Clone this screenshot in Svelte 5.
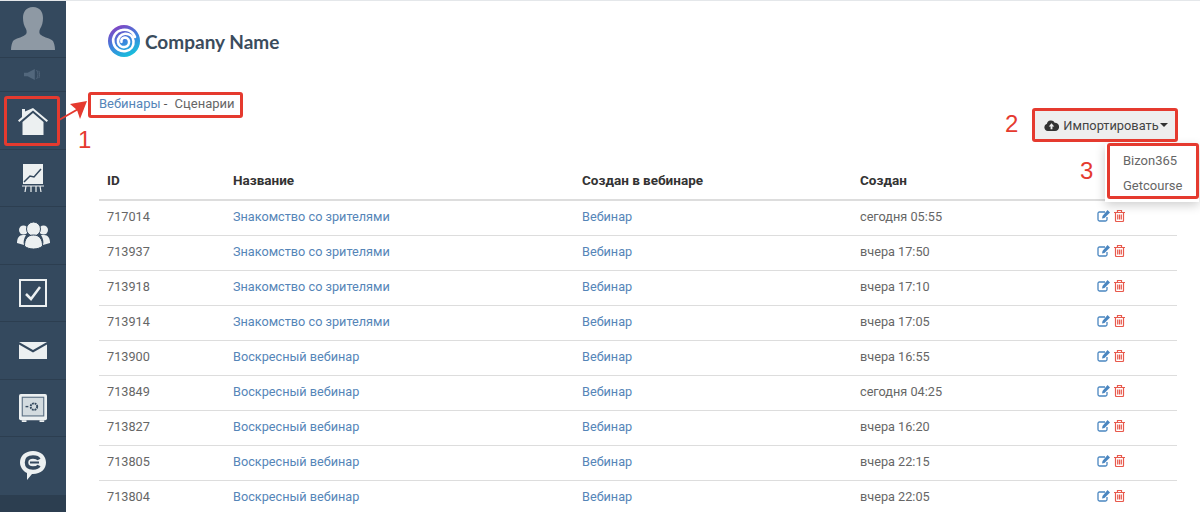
<script>
  const rows = [
    ["717014", "Знакомство со зрителями", "сегодня 05:55"],
    ["713937", "Знакомство со зрителями", "вчера 17:50"],
    ["713918", "Знакомство со зрителями", "вчера 17:10"],
    ["713914", "Знакомство со зрителями", "вчера 17:05"],
    ["713900", "Воскресный вебинар", "вчера 16:55"],
    ["713849", "Воскресный вебинар", "сегодня 04:25"],
    ["713827", "Воскресный вебинар", "вчера 16:20"],
    ["713805", "Воскресный вебинар", "вчера 22:15"],
    ["713804", "Воскресный вебинар", "вчера 22:05"],
  ];
</script>

<div class="page">
  <aside class="sidebar">
    <div class="item avatar">
      <svg width="44" height="43" viewBox="0 0 44 43">
        <path fill="#8e99a4" d="M22 0c-7 0-10 5-10 11 0 4 1 8 3 11 1 2 1 5-1 6-4 3-9 3-12 6-1 2-2 5-2 9h44c0-4-1-7-2-9-3-3-8-3-12-6-2-1-2-4-1-6 2-3 3-7 3-11 0-6-3-11-10-11z" />
      </svg>
    </div>
    <div class="item speaker">
      <svg width="18" height="13" viewBox="0 0 20 14">
        <path fill="#52677c" d="M0 5h4l8-4v12l-8-4H0z" />
        <path fill="none" stroke="#52677c" d="M14 2c2 3 2 7 0 10M16.500 3c1 2 1 6 0 8" />
      </svg>
    </div>
    <div class="item home">
      <svg width="30" height="27" viewBox="0 0 30 27">
        <path fill="#ecf0f1" d="M4 1h3v2.500L15 0l15 12.500-1.300 1.500L15 2.500 1.300 14 0 12.500l4-3.500zM4.500 14 15 5l10.500 9v13h-21z" />
      </svg>
    </div>
    <div class="item chart">
      <svg width="22" height="28" viewBox="0 0 22 28">
        <path fill="#ecf0f1" d="M1 0h20v20H1z" />
        <path fill="none" stroke="#34495e" stroke-width="1.500" d="M2 18l6-6 4 1 7-8" />
        <path fill="none" stroke="#ecf0f1" stroke-width="1.200" d="M0 22h22M4 22l-1 6M9 22v6M14 22v6M18 22l1 6" />
      </svg>
    </div>
    <div class="item users">
      <svg width="33" height="27" viewBox="0 0 33 27">
        <circle cx="6.500" cy="8" r="4.500" fill="#ecf0f1" />
        <circle cx="26.500" cy="8" r="4.500" fill="#ecf0f1" />
        <path fill="#ecf0f1" d="M0 21c0-5 2-8 6-8h3c-2 3-3 7-2 10zM33 21c0-5-2-8-6-8h-3c2 3 3 7 2 10z" />
        <circle cx="16.500" cy="7" r="7" stroke="#34495e" fill="#ecf0f1" />
        <path fill="#ecf0f1" stroke="#34495e" d="M7.500 24c0-7 3-11 9-11s9 4 9 11c-4 4-14 4-18 0z" />
      </svg>
    </div>
    <div class="item check">
      <svg width="28" height="28" viewBox="0 0 28 28">
        <rect x="1" y="1" width="26" height="26" fill="none" stroke="#ecf0f1" stroke-width="2" />
        <path fill="none" stroke="#ecf0f1" stroke-width="2.500" d="M7 15l5 5 9-12" />
      </svg>
    </div>
    <div class="item mail">
      <svg width="28" height="17" viewBox="0 0 28 17">
        <path fill="#ecf0f1" d="M0 0h28L14 8zM0 2.500l14 8 14-8V17H0z" />
      </svg>
    </div>
    <div class="item safe">
      <svg width="28" height="28" viewBox="0 0 30 30">
        <rect width="30" height="28" rx="2" fill="#ecf0f1" />
        <rect x="3.500" y="3.500" width="23" height="20" fill="#d3dbdf" stroke="#5b7083" stroke-width="1.200" />
        <circle cx="16" cy="13.500" r="3.500" fill="none" stroke="#34495e" stroke-width="2" stroke-dasharray="2 0.800" />
        <path stroke="#34495e" stroke-width="1.500" d="M7 13.500h3" />
        <path fill="#ecf0f1" d="M3 28h5v2H3zM22 28h5v2h-5z" />
      </svg>
    </div>
    <div class="item chat">
      <svg width="26" height="29" viewBox="0 0 26 29">
        <path fill="#ecf0f1" d="M13 0c8 0 13 5 13 11.500S21 23 13 23h-1l-5 6v-7C3 20 0 16 0 11.500 0 5 5 0 13 0z" />
        <path fill="none" stroke="#34495e" stroke-width="3.500" d="M19 8.500C18 6.500 16 6 13 6c-4 0-6.500 2-6.500 5.500S9 17 13 17c3 0 5-.5 6-2.500" />
        <path fill="none" stroke="#34495e" stroke-width="2" d="M10 11.500h9" />
      </svg>
    </div>
    <div class="rest"></div>
  </aside>

  <main class="content">
    <header class="logo">
      <svg width="32" height="32" viewBox="0 0 32 32">
        <defs>
          <linearGradient id="sw" x1="0.200" y1="0" x2="0.700" y2="1">
            <stop offset="0" stop-color="#8a3cc0" />
            <stop offset="0.500" stop-color="#3f80dc" />
            <stop offset="1" stop-color="#14c4dc" />
          </linearGradient>
        </defs>
        <circle cx="16" cy="16" r="16" fill="url(#sw)" />
        <path fill="none" stroke="#fff" stroke-width="2.600" stroke-linecap="round" d="M27 12C25 6 19 4 14 5 8 6 4 12 5.500 18c1.500 6 7 9 12.500 8 5-1 8-5 7.500-10-.5-4.500-4-7.500-8.500-7.300C13 9 9.500 12.500 10 17c.4 3.500 3.500 5.500 6.800 5 3-.5 4.700-3 4.200-6-.5-2.500-2.700-3.800-5-3.300-2 .4-3 2.300-2.500 4.100" />
      </svg>
      <span>Company Name</span>
    </header>

    <div class="toolbar">
      <nav class="crumbs"><a href="#top">Вебинары</a> <b>-</b> <span>Сценарии</span></nav>
      <div class="import">
        <button type="button">
          <svg width="15" height="11" viewBox="0 0 16 12">
            <path fill="#333" d="M4 12a4 4 0 0 1-1-7.800A4.500 4.500 0 0 1 11.500 3 4.500 4.500 0 0 1 12 12z" />
            <path fill="#eee" d="M8 3.500 11 7H9v3H7V7H5z" />
          </svg>
          Импортировать<i class="caret"></i>
        </button>
        <div class="menu">
          <div>Bizon365</div>
          <div>Getcourse</div>
        </div>
      </div>
    </div>

    <table>
      <thead>
        <tr>
          <th class="c-id">ID</th>
          <th class="c-name">Название</th>
          <th class="c-web">Создан в вебинаре</th>
          <th class="c-date">Создан</th>
          <th></th>
        </tr>
      </thead>
      <tbody>
        {#each rows as [id, name, date]}
          <tr>
            <td>{id}</td>
            <td><a href="#top">{name}</a></td>
            <td><a href="#top">Вебинар</a></td>
            <td>{date}</td>
            <td class="actions">
              <svg width="13" height="12" viewBox="0 0 13 12">
                <path fill="none" stroke="#4a86c0" stroke-width="1.300" d="M8 2H2.500C1.500 2 1 2.500 1 3.500v6c0 1 .5 1.500 1.500 1.500h6c1 0 1.500-.5 1.500-1.500V7" />
                <path fill="#4a86c0" d="M10.500 0 13 2.500 7.500 8 5 8.500 5.500 6z" />
              </svg>
              <svg class="trash" width="11" height="12" viewBox="0 0 11 12">
                <path fill="none" stroke="#e8594c" stroke-width="1.200" d="M0 2.500h11M3.500 2.500v-2h4v2M1.500 2.500v8c0 .6.400 1 1 1h6c.6 0 1-.4 1-1v-8M3.700 4.500v5M5.500 4.500v5M7.300 4.500v5" />
              </svg>
            </td>
          </tr>
        {/each}
      </tbody>
    </table>
  </main>

  <!-- разметка поверх скриншота -->
  <div class="mark" style="left:4px;top:95px;width:50px;height:44px"></div>
  <div class="mark" style="left:88px;top:91px;width:149px;height:20px"></div>
  <div class="mark" style="left:1032px;top:107px;width:140px;height:28px"></div>
  <div class="mark" style="left:1107px;top:142px;width:86px;height:50px"></div>
  <svg class="arrow" width="40" height="32" viewBox="0 0 40 32">
    <path fill="none" stroke="#e53a2f" stroke-width="2" d="M1 22 22 10" />
    <path fill="#e53a2f" d="M29 3 12 6l7 6 3 9z" />
  </svg>
  <span class="num" style="left:78px;top:126px">1</span>
  <span class="num" style="left:1005px;top:110px">2</span>
  <span class="num" style="left:1080px;top:157px">3</span>
</div>

<style>
  :global(body) {
    background: #fff;
    font-family: Roboto, "Liberation Sans", sans-serif;
    overflow: hidden;
  }

  .page {
    position: relative;
    display: flex;
    height: 512px;
    overflow: hidden;
    border-top: 1px solid #e4e7ea;
    box-sizing: border-box;
    color: #666;
  }

  .sidebar {
    width: 66px;
    flex: none;
    display: flex;
    flex-direction: column;
    background: #34495e;
  }

  .item {
    height: 57.5px;
    display: flex;
    align-items: center;
    justify-content: center;
    box-sizing: border-box;
    border-bottom: 1px solid #2c3e50;
    flex: none;
  }

  .avatar {
    height: 57px;
    padding-bottom: 2px;
  }
  .speaker {
    height: 34px;
  }
  .home {
    padding-top: 3px;
  }
  .chat {
    border-bottom: 0;
  }
  .rest {
    flex: 1;
    background: #2c3e50;
  }

  .content {
    flex: 1;
    padding: 0 23px 0 33px;
    min-width: 0;
  }

  .logo {
    display: flex;
    align-items: center;
    gap: 5px;
    height: 80px;
    padding-left: 9px;
    color: #3b4c5d;
    box-sizing: border-box;
  }
  .logo span {
    font-family: Lato, "Noto Sans", sans-serif;
    font-size: 19px;
    font-weight: 700;
  }

  .toolbar {
    display: flex;
    justify-content: space-between;
    height: 82px;
    box-sizing: border-box;
  }

  .crumbs {
    font-size: 13px;
    padding-top: 14px;
    line-height: 18px;
  }
  .crumbs a {
    color: #5585b8;
    text-decoration: none;
  }
  .crumbs b {
    color: #555;
    font-weight: 400;
    margin-right: 4px;
  }

  .import {
    position: relative;
    padding-top: 29px;
  }
  .import button {
    display: flex;
    align-items: center;
    gap: 4px;
    width: 142px;
    height: 30px;
    justify-content: center;
    padding: 0;
    border: 0;
    background: #eee;
    color: #444;
    font: inherit;
    font-size: 12.800px;
  }
  .caret {
    width: 0;
    height: 0;
    margin-left: -3px;
    border: 4px solid transparent;
    border-top-color: #333;
    border-bottom: 0;
  }
  .menu {
    position: absolute;
    top: 63px;
    right: -22px;
    width: 94px;
    padding: 4px 0;
    background: #fff;
    box-shadow: 0 3px 10px rgba(0, 0, 0, 0.2);
    color: #666;
    font-size: 13px;
    line-height: 25px;
    text-indent: 18px;
  }

  table {
    width: 100%;
    border-collapse: collapse;
    font-size: 12.700px;
    table-layout: fixed;
  }
  th {
    height: 37px;
    padding: 0 8px 2px;
    text-align: left;
    font-size: 13.500px;
    font-weight: 700;
    color: #333;
    border-bottom: 2px solid #ddd;
    box-sizing: border-box;
  }
  .c-id {
    width: 126px;
  }
  .c-name {
    width: 349px;
  }
  .c-web {
    width: 278px;
  }
  .c-date {
    width: 237px;
  }
  td {
    height: 35px;
    padding: 0 8px 2px;
    border-bottom: 1px solid #ddd;
    box-sizing: border-box;
  }
  td a {
    color: #5585b8;
    text-decoration: none;
  }
  .actions svg {
    vertical-align: -1px;
  }
  .actions .trash {
    margin-left: 1px;
  }

  .mark {
    position: absolute;
    border: 3px solid #e53a2f;
    border-radius: 3px;
    pointer-events: none;
  }
  .arrow {
    position: absolute;
    left: 58px;
    top: 97px;
  }
  .num {
    position: absolute;
    color: #e53a2f;
    font-family: "Liberation Sans", sans-serif;
    font-size: 24px;
    line-height: 26px;
  }
</style>
